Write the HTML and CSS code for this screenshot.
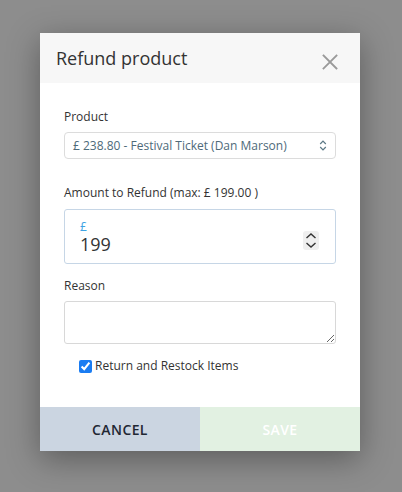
FILE: index.html
```html
<!DOCTYPE html>
<html lang="en">
<head>
<meta charset="utf-8">
<title>Refund product</title>
<link rel="stylesheet" href="styles.css">
</head>
<body>
<div class="modal">
  <div class="modal-header">
    <h1 class="modal-title">Refund product</h1>
    <svg class="close" width="16" height="16" viewBox="0 0 16 16" aria-label="Close">
      <path d="M1.5 1.5 L14.5 14.5 M14.5 1.5 L1.5 14.5" stroke="#9a9a9a" stroke-width="1.8" fill="none" stroke-linecap="square"/>
    </svg>
  </div>
  <div class="modal-body">
    <div class="group group-product">
      <div class="label">Product</div>
      <div class="select">
        <span class="select-text">£ 238.80 - Festival Ticket (Dan Marson)</span>
        <svg class="select-arrows" width="8" height="11" viewBox="0 0 8 11">
          <path d="M1.2 4 L4 1.2 L6.8 4 M1.2 7 L4 9.8 L6.8 7" stroke="#5b7785" stroke-width="1.2" fill="none"/>
        </svg>
      </div>
    </div>
    <div class="group group-amount">
      <div class="label">Amount to Refund (max: £ 199.00 )</div>
      <div class="amount">
        <div class="amount-values">
          <span class="currency">£</span>
          <span class="amount-value">199</span>
        </div>
        <div class="spinner">
          <svg width="16" height="19" viewBox="0 0 16 19">
            <path d="M3.5 7 L8 3 L12.5 7 M3.5 12 L8 16 L12.5 12" stroke="#333" stroke-width="1.4" fill="none"/>
          </svg>
        </div>
      </div>
    </div>
    <div class="group group-reason">
      <div class="label">Reason</div>
      <textarea class="reason"></textarea>
    </div>
    <label class="check-row">
      <input type="checkbox" class="check" checked>
      <span>Return and Restock Items</span>
    </label>
  </div>
  <div class="modal-footer">
    <button class="btn btn-cancel">CANCEL</button>
    <button class="btn btn-save">SAVE</button>
  </div>
</div>
</body>
</html>
```
FILE: styles.css
```css
html, body {
  margin: 0;
  padding: 0;
}
body {
  background: #8d8d8d;
  font-family: "Open Sans", "Noto Sans", sans-serif;
  color: #333;
  width: 402px;
  height: 492px;
  overflow: hidden;
}
.modal {
  margin: 33px 0 0 40px;
  width: 320px;
  height: 418px;
  background: #fff;
  box-shadow: 0 8px 30px rgba(0, 0, 0, 0.35);
  display: flex;
  flex-direction: column;
}
.modal-header {
  height: 50px;
  background: #f7f7f7;
  display: flex;
  align-items: center;
  justify-content: space-between;
  padding: 0 22px 0 16px;
  box-sizing: border-box;
}
.modal-title {
  margin: 0;
  font-size: 18px;
  font-weight: 400;
  color: #333;
  line-height: 24px;
}
.close {
  margin-top: 8px;
  display: block;
}
.modal-body {
  flex: 1;
  padding: 25px 24px 0;
}
.label {
  font-size: 12px;
  line-height: 18px;
  color: #333;
}
.group-product .label { margin-bottom: 6px; }
.group-amount { margin-top: 25px; }
.group-amount .label { margin-bottom: 7px; }
.group-reason { margin-top: 13px; }
.group-reason .label { margin-bottom: 6px; }
.select {
  height: 27px;
  box-sizing: border-box;
  border: 1px solid #dcdcdc;
  border-radius: 4px;
  display: flex;
  align-items: center;
  justify-content: space-between;
  padding: 0 8px 0 8px;
}
.select-text {
  font-size: 12px;
  color: #4e6a79;
}
.select-arrows { display: block; }
.amount {
  height: 55px;
  box-sizing: border-box;
  border: 1px solid #c6d6e6;
  border-radius: 3px;
  display: flex;
  align-items: center;
  justify-content: space-between;
  padding: 0 16px 0 15px;
}
.amount-values {
  display: flex;
  flex-direction: column;
  gap: 1px;
  margin-top: 1px;
}
.currency {
  font-size: 12px;
  line-height: 13px;
  color: #3ea3e3;
}
.amount-value {
  font-size: 18px;
  line-height: 21px;
  color: #333;
}
.spinner {
  width: 16px;
  height: 19px;
  background: #efefef;
  border-radius: 3px;
  margin-top: 8px;
}
.spinner svg { display: block; }
.reason {
  display: block;
  width: 100%;
  height: 43px;
  box-sizing: border-box;
  border: 1px solid #d8d8d8;
  border-radius: 3px;
  resize: vertical;
  margin: 0;
  font-family: inherit;
}
.check-row {
  display: flex;
  align-items: center;
  margin-top: 13px;
  padding-left: 15px;
  font-size: 12px;
  line-height: 18px;
  color: #333;
}
.check {
  width: 13px;
  height: 13px;
  margin: 0 3px 0 0;
  accent-color: #1a7cf2;
}
.modal-footer {
  height: 44px;
  display: flex;
}
.btn {
  flex: 1;
  border: 0;
  margin: 0;
  font-family: "Open Sans", "Noto Sans", sans-serif;
  font-size: 14px;
  font-weight: 600;
  letter-spacing: 0.4px;
  cursor: pointer;
}
.btn-cancel {
  background: #cbd5e1;
  color: #1f2733;
}
.btn-save {
  background: #e2f1e2;
  color: #ffffff;
}
```
